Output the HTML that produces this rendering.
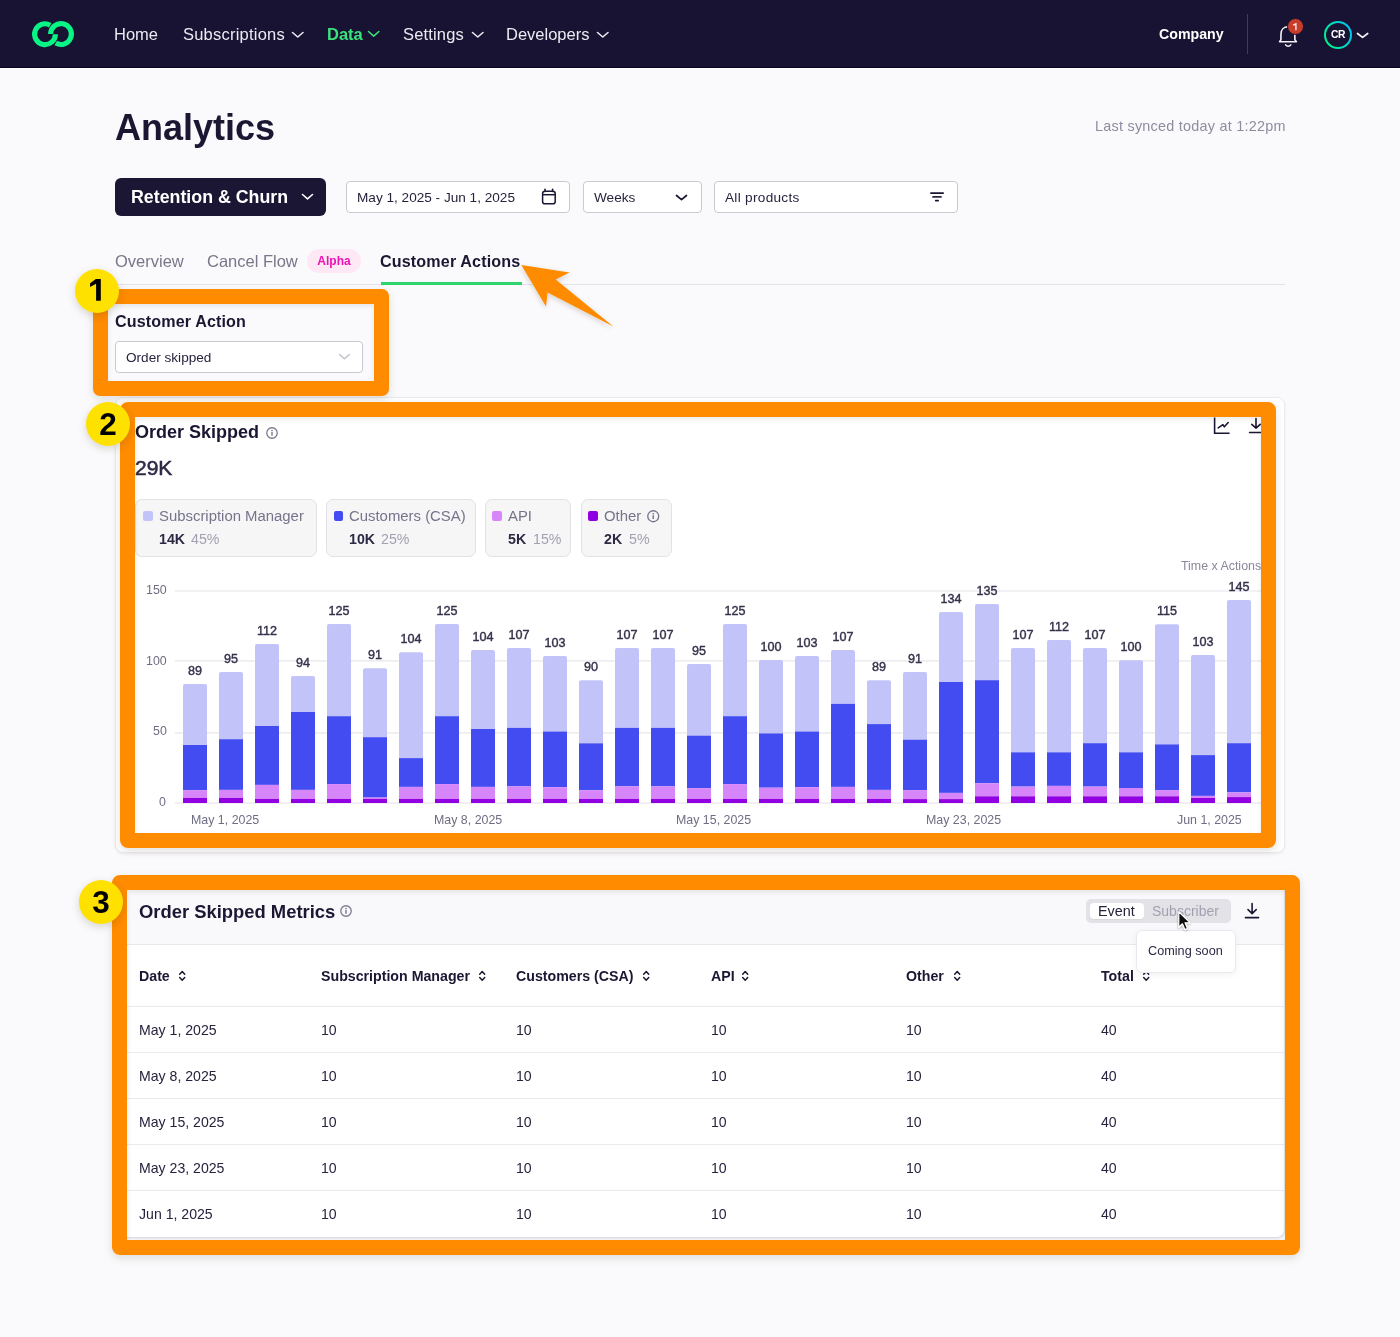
<!DOCTYPE html>
<html><head><meta charset="utf-8"><title>Analytics</title>
<style>
html,body{margin:0;padding:0;}
body{width:1400px;height:1337px;overflow:hidden;position:relative;background:#fafafc;font-family:"Liberation Sans",sans-serif;}
.a{position:absolute;}
.t{position:absolute;white-space:nowrap;}
svg.a{overflow:visible;}
.t{-webkit-font-smoothing:antialiased;will-change:transform;}
</style></head><body>
<div class="a" style="left:0.00px;top:0.00px;width:1400.00px;height:67.00px;background:#181332;"></div>
<div class="a" style="left:0.00px;top:67.00px;width:1400.00px;height:1.00px;background:#08041f;"></div>
<div class="a" style="left:0.00px;top:68.00px;width:1400.00px;height:1.00px;background:#ffffff;"></div>
<svg class="a" style="left:0;top:0" width="100" height="67"><path d="M55.40 34.20 A10.4 10.4 0 1 1 50.20 25.19" fill="none" stroke="#08f586" stroke-width="5.1"/><path d="M50.60 34.00 A10.4 10.4 0 1 1 55.80 43.01" fill="none" stroke="#08f586" stroke-width="5.1"/></svg>
<div class="t" style="left:113.80px;top:25.20px;font-size:16.5px;line-height:19.8px;font-weight:400;color:#eceaf2;">Home</div>
<div class="t" style="left:182.60px;top:25.20px;font-size:16.5px;line-height:19.8px;font-weight:400;color:#eceaf2;letter-spacing:0.22px;">Subscriptions</div>
<svg class="a" style="left:290.2px;top:29.5px" width="15.5" height="9.5" viewBox="-2 -2 15.5 9.5"><path d="M0.5 0.5 L5.75 5.0 L11.0 0.5" fill="none" stroke="#eceaf2" stroke-width="1.6" stroke-linecap="round" stroke-linejoin="round"/></svg>
<div class="t" style="left:326.80px;top:25.20px;font-size:16.5px;line-height:19.8px;font-weight:700;color:#3ce27c;">Data</div>
<svg class="a" style="left:366.3px;top:29.3px" width="15.4" height="9.6" viewBox="-2 -2 15.4 9.6"><path d="M0.5 0.5 L5.7 5.1 L10.9 0.5" fill="none" stroke="#3ce27c" stroke-width="1.6" stroke-linecap="round" stroke-linejoin="round"/></svg>
<div class="t" style="left:402.80px;top:25.20px;font-size:16.5px;line-height:19.8px;font-weight:400;color:#eceaf2;letter-spacing:0.17px;">Settings</div>
<svg class="a" style="left:470px;top:29.5px" width="15.5" height="9.5" viewBox="-2 -2 15.5 9.5"><path d="M0.5 0.5 L5.75 5.0 L11.0 0.5" fill="none" stroke="#eceaf2" stroke-width="1.6" stroke-linecap="round" stroke-linejoin="round"/></svg>
<div class="t" style="left:505.60px;top:25.20px;font-size:16.5px;line-height:19.8px;font-weight:400;color:#eceaf2;">Developers</div>
<svg class="a" style="left:595.2px;top:29.5px" width="15.5" height="9.5" viewBox="-2 -2 15.5 9.5"><path d="M0.5 0.5 L5.75 5.0 L11.0 0.5" fill="none" stroke="#eceaf2" stroke-width="1.6" stroke-linecap="round" stroke-linejoin="round"/></svg>
<div class="t" style="left:1158.80px;top:25.90px;font-size:14.2px;line-height:17.04px;font-weight:700;color:#ffffff;">Company</div>
<div class="a" style="left:1247.00px;top:14.00px;width:1.00px;height:40.00px;background:#3e3a57;"></div>
<svg class="a" style="left:1276px;top:18px" width="26" height="32" viewBox="0 0 26 32">
<path d="M3.6 23.7 L4.9 21.8 L5 16 C5 11.6 7.8 8.8 12 8.8 C16.2 8.8 18.8 11.6 18.8 16 L18.9 21.8 L20.4 23.7 Z" fill="none" stroke="#f3f2f7" stroke-width="1.6" stroke-linejoin="round"/>
<path d="M9.6 26.9 C10.9 28.7 13.5 28.7 14.8 26.9" fill="none" stroke="#f3f2f7" stroke-width="1.6" stroke-linecap="round"/>
</svg>
<div class="a" style="left:1286.6px;top:17.6px;width:15.2px;height:15.2px;border-radius:50%;background:#c63d2b;border:1.3px solid #181332;"></div>
<svg class="a" style="left:1280px;top:14px" width="30" height="30"><path d="M13.1 11.1 L15.9 9.9 V16.3" fill="none" stroke="#f6e9e6" stroke-width="1.4"/></svg>
<svg class="a" style="left:1322px;top:19px" width="32" height="32" viewBox="0 0 32 32"><defs><linearGradient id="ag" x1="0" y1="0.75" x2="1" y2="0.25"><stop offset="0" stop-color="#00f48a"/><stop offset="1" stop-color="#00c4f4"/></linearGradient></defs>
<circle cx="16" cy="16" r="13" fill="none" stroke="url(#ag)" stroke-width="2"/></svg>
<div class="t" style="left:1138.20px;width:400px;text-align:center;top:29.00px;font-size:10.3px;line-height:12.36px;font-weight:700;color:#ffffff;letter-spacing:-0.35px;">CR</div>
<svg class="a" style="left:1355.3px;top:30.700000000000003px" width="15.2" height="8.9" viewBox="-2 -2 15.2 8.9"><path d="M0.5 0.5 L5.6 4.4 L10.7 0.5" fill="none" stroke="#f3f2f7" stroke-width="1.7" stroke-linecap="round" stroke-linejoin="round"/></svg>
<div class="t" style="left:114.80px;top:105.80px;font-size:36px;line-height:43.2px;font-weight:700;color:#1b1733;">Analytics</div>
<div class="t" style="right:114.70px;top:117.70px;font-size:14.4px;line-height:17.28px;font-weight:400;color:#8e8c9f;letter-spacing:0.25px;">Last synced today at 1:22pm</div>
<div class="a" style="left:115.00px;top:178.00px;width:211.00px;height:38.00px;background:#1b1633;border-radius:6px;"></div>
<div class="t" style="left:130.50px;top:186.90px;font-size:17.8px;line-height:21.36px;font-weight:700;color:#ffffff;">Retention &amp; Churn</div>
<svg class="a" style="left:299.5px;top:192.4px" width="15" height="9.3" viewBox="-2 -2 15 9.3"><path d="M0.5 0.5 L5.5 4.8 L10.5 0.5" fill="none" stroke="#ffffff" stroke-width="1.6" stroke-linecap="round" stroke-linejoin="round"/></svg>
<div class="a" style="left:346.00px;top:181.00px;width:224.00px;height:31.50px;background:#ffffff;border:1px solid #cbc9d3;border-radius:4px;box-sizing:border-box;"></div>
<div class="t" style="left:357.30px;top:189.90px;font-size:13.6px;line-height:16.32px;font-weight:400;color:#27233d;">May 1, 2025 - Jun 1, 2025</div>
<svg class="a" style="left:540px;top:187px" width="18" height="19" viewBox="0 0 18 19">
<rect x="2.6" y="4.2" width="12.6" height="12.6" rx="2.4" fill="none" stroke="#1b1733" stroke-width="1.5"/>
<line x1="2.6" y1="7.7" x2="15.2" y2="7.7" stroke="#1b1733" stroke-width="1.5"/>
<line x1="5" y1="2.3" x2="5" y2="4.5" stroke="#1b1733" stroke-width="1.5" stroke-linecap="round"/>
<line x1="12.6" y1="2.3" x2="12.6" y2="4.5" stroke="#1b1733" stroke-width="1.5" stroke-linecap="round"/>
</svg>
<div class="a" style="left:582.50px;top:181.00px;width:119.50px;height:31.50px;background:#ffffff;border:1px solid #cbc9d3;border-radius:4px;box-sizing:border-box;"></div>
<div class="t" style="left:594.30px;top:189.90px;font-size:13.6px;line-height:16.32px;font-weight:400;color:#27233d;">Weeks</div>
<svg class="a" style="left:673.6px;top:192.6px" width="15" height="9.2" viewBox="-2 -2 15 9.2"><path d="M0.5 0.5 L5.5 4.7 L10.5 0.5" fill="none" stroke="#1b1733" stroke-width="1.7" stroke-linecap="round" stroke-linejoin="round"/></svg>
<div class="a" style="left:714.00px;top:181.00px;width:244.00px;height:31.50px;background:#ffffff;border:1px solid #cbc9d3;border-radius:4px;box-sizing:border-box;"></div>
<div class="t" style="left:725.30px;top:189.90px;font-size:13.6px;line-height:16.32px;font-weight:400;color:#27233d;letter-spacing:0.3px;">All products</div>
<svg class="a" style="left:928px;top:190px" width="18" height="14" viewBox="0 0 18 14">
<line x1="2.9" y1="3.1" x2="15.2" y2="3.1" stroke="#1b1733" stroke-width="1.7" stroke-linecap="round"/>
<line x1="5" y1="6.9" x2="13" y2="6.9" stroke="#2a2640" stroke-width="1.7" stroke-linecap="round"/>
<line x1="7.7" y1="10.55" x2="10.2" y2="10.55" stroke="#1b1733" stroke-width="1.7" stroke-linecap="round"/>
</svg>
<div class="a" style="left:115.00px;top:284.00px;width:1170.00px;height:1.00px;background:#e4e3e9;"></div>
<div class="t" style="left:114.60px;top:251.90px;font-size:16.5px;line-height:19.8px;font-weight:400;color:#787689;">Overview</div>
<div class="t" style="left:206.50px;top:251.90px;font-size:16.5px;line-height:19.8px;font-weight:400;color:#787689;">Cancel Flow</div>
<div class="a" style="left:307.00px;top:249.00px;width:54.00px;height:24.00px;background:#fee8f6;border-radius:12px;"></div>
<div class="t" style="left:134.00px;width:400px;text-align:center;top:254.00px;font-size:12px;line-height:14.4px;font-weight:700;color:#ec12b4;">Alpha</div>
<div class="t" style="left:380.30px;top:251.90px;font-size:16.1px;line-height:19.32px;font-weight:700;color:#1b1733;letter-spacing:0.15px;">Customer Actions</div>
<div class="a" style="left:381.00px;top:282.00px;width:141.00px;height:3.00px;background:#2fd46f;"></div>
<div class="t" style="left:114.60px;top:312.00px;font-size:16.1px;line-height:19.32px;font-weight:700;color:#1b1733;letter-spacing:0.13px;">Customer Action</div>
<div class="a" style="left:115.00px;top:341.00px;width:248.00px;height:32.00px;background:#ffffff;border:1px solid #c9c7d1;border-radius:4px;box-sizing:border-box;"></div>
<div class="t" style="left:126.30px;top:349.80px;font-size:13.6px;line-height:16.32px;font-weight:400;color:#27233d;">Order skipped</div>
<svg class="a" style="left:336.6px;top:352.4px" width="14.8" height="9.3" viewBox="-2 -2 14.8 9.3"><path d="M0.5 0.5 L5.4 4.8 L10.3 0.5" fill="none" stroke="#c2c1cb" stroke-width="1.5" stroke-linecap="round" stroke-linejoin="round"/></svg>
<div class="a" style="left:115.00px;top:397.00px;width:1170.00px;height:456.00px;background:#ffffff;border:1px solid #ebeaef;border-radius:8px;box-sizing:border-box;box-shadow:0 1px 3px rgba(20,20,50,0.06);"></div>
<div class="t" style="left:134.80px;top:422.00px;font-size:18px;line-height:21.6px;font-weight:700;color:#1b1733;">Order Skipped</div>
<svg class="a" style="left:266.05px;top:427px" width="12" height="12" viewBox="0 0 12 12"><circle cx="6.0" cy="6.0" r="5.25" fill="none" stroke="#7c7a8f" stroke-width="1.3"/><line x1="6.0" y1="5.1" x2="6.0" y2="8.8" stroke="#7c7a8f" stroke-width="1.45" stroke-linecap="butt"/><circle cx="6.0" cy="3.5" r="0.85" fill="#7c7a8f"/></svg>
<div class="t" style="left:134.80px;top:455.00px;font-size:21px;line-height:25.2px;font-weight:400;color:#2d2a45;-webkit-text-stroke:0.55px #2d2a45;">29K</div>
<svg class="a" style="left:1210px;top:412px" width="56" height="26" viewBox="0 0 56 26">
<path d="M4.6 5.5 V21.2 H19.6" fill="none" stroke="#1b1733" stroke-width="1.6"/>
<path d="M8.2 15.9 L12.9 12.6 L14.3 14.8 L18.2 10.5" fill="none" stroke="#1b1733" stroke-width="1.6" stroke-linecap="round" stroke-linejoin="round"/>
<path d="M46 6.5 V16.2 M41.8 12.3 L46 16.2 L50.2 12.3 M39.6 20.5 H52.5" fill="none" stroke="#1b1733" stroke-width="1.6" stroke-linecap="round" stroke-linejoin="round"/>
</svg>
<div class="a" style="left:135.40px;top:499.00px;width:181.30px;height:58.00px;background:#f6f6f7;border:1px solid #e2e1e6;border-radius:7px;box-sizing:border-box;"></div>
<div class="a" style="left:143.20px;top:511.40px;width:9.80px;height:9.70px;background:#c1c3f9;border-radius:2px;"></div>
<div class="t" style="left:158.90px;top:507.70px;font-size:14.9px;line-height:17.88px;font-weight:400;color:#76748a;">Subscription Manager</div>
<div class="t" style="left:158.70px;top:530.90px;font-size:14.2px;line-height:17.04px;font-weight:700;color:#2d2a45;">14K</div>
<div class="a" style="left:325.70px;top:499.00px;width:149.90px;height:58.00px;background:#f6f6f7;border:1px solid #e2e1e6;border-radius:7px;box-sizing:border-box;"></div>
<div class="a" style="left:333.50px;top:511.40px;width:9.80px;height:9.70px;background:#434cf1;border-radius:2px;"></div>
<div class="t" style="left:349.20px;top:507.70px;font-size:14.9px;line-height:17.88px;font-weight:400;color:#76748a;">Customers (CSA)</div>
<div class="t" style="left:349.00px;top:530.90px;font-size:14.2px;line-height:17.04px;font-weight:700;color:#2d2a45;">10K</div>
<div class="a" style="left:484.60px;top:499.00px;width:86.90px;height:58.00px;background:#f6f6f7;border:1px solid #e2e1e6;border-radius:7px;box-sizing:border-box;"></div>
<div class="a" style="left:492.40px;top:511.40px;width:9.80px;height:9.70px;background:#d786f9;border-radius:2px;"></div>
<div class="t" style="left:508.10px;top:507.70px;font-size:14.9px;line-height:17.88px;font-weight:400;color:#76748a;">API</div>
<div class="t" style="left:507.90px;top:530.90px;font-size:14.2px;line-height:17.04px;font-weight:700;color:#2d2a45;">5K</div>
<div class="a" style="left:580.50px;top:499.00px;width:91.00px;height:58.00px;background:#f6f6f7;border:1px solid #e2e1e6;border-radius:7px;box-sizing:border-box;"></div>
<div class="a" style="left:588.30px;top:511.40px;width:9.80px;height:9.70px;background:#9100e0;border-radius:2px;"></div>
<div class="t" style="left:604.00px;top:507.70px;font-size:14.9px;line-height:17.88px;font-weight:400;color:#76748a;">Other</div>
<div class="t" style="left:603.80px;top:530.90px;font-size:14.2px;line-height:17.04px;font-weight:700;color:#2d2a45;">2K</div>
<div class="t" style="left:191.00px;top:530.90px;font-size:14.2px;line-height:17.04px;font-weight:400;color:#a3a1b1;">45%</div>
<div class="t" style="left:381.00px;top:530.90px;font-size:14.2px;line-height:17.04px;font-weight:400;color:#a3a1b1;">25%</div>
<div class="t" style="left:532.70px;top:530.90px;font-size:14.2px;line-height:17.04px;font-weight:400;color:#a3a1b1;">15%</div>
<div class="t" style="left:628.60px;top:530.90px;font-size:14.2px;line-height:17.04px;font-weight:400;color:#a3a1b1;">5%</div>
<svg class="a" style="left:646.65px;top:510.05px" width="12.5" height="12.5" viewBox="0 0 12.5 12.5"><circle cx="6.25" cy="6.25" r="5.5" fill="none" stroke="#76748a" stroke-width="1.3"/><line x1="6.25" y1="5.35" x2="6.25" y2="9.05" stroke="#76748a" stroke-width="1.45" stroke-linecap="butt"/><circle cx="6.25" cy="3.75" r="0.85" fill="#76748a"/></svg>
<div class="t" style="left:1180.80px;top:558.80px;font-size:12.4px;line-height:14.88px;font-weight:400;color:#8a889b;">Time x Actions</div>
<svg class="a" style="left:0;top:0" width="1400" height="860"><line x1="175" y1="591" x2="1262" y2="591" stroke="#eeeef1" stroke-width="1.7"/><line x1="175" y1="660.8" x2="1262" y2="660.8" stroke="#eeeef1" stroke-width="1.7"/><line x1="175" y1="732.8" x2="1262" y2="732.8" stroke="#eeeef1" stroke-width="1.7"/><line x1="175" y1="803.2" x2="1262" y2="803.2" stroke="#eeeef1" stroke-width="1.7"/></svg>
<div class="t" style="right:1233.70px;top:583.00px;font-size:12.4px;line-height:14.88px;font-weight:400;color:#6f6d83;">150</div>
<div class="t" style="right:1233.70px;top:653.70px;font-size:12.4px;line-height:14.88px;font-weight:400;color:#6f6d83;">100</div>
<div class="t" style="right:1233.70px;top:724.30px;font-size:12.4px;line-height:14.88px;font-weight:400;color:#6f6d83;">50</div>
<div class="t" style="right:1233.70px;top:795.00px;font-size:12.4px;line-height:14.88px;font-weight:400;color:#6f6d83;">0</div>
<svg class="a" style="left:0;top:0" width="1400" height="860" viewBox="0 0 1400 860"><path d="M183 745.0 V686.1 Q183 684.1 185 684.1 H205 Q207 684.1 207 686.1 V745.0 Z" fill="#c1c3f9"/><rect x="183" y="745.0" width="24" height="45.20" fill="#434cf1"/><rect x="183" y="790.1999999999999" width="24" height="7.70" fill="#d786f9"/><rect x="183" y="797.9" width="24" height="5.10" fill="#9100e0"/><path d="M219 739.1999999999999 V673.9 Q219 671.9 221 671.9 H241 Q243 671.9 243 673.9 V739.1999999999999 Z" fill="#c1c3f9"/><rect x="219" y="739.1999999999999" width="24" height="50.70" fill="#434cf1"/><rect x="219" y="789.9" width="24" height="8.00" fill="#d786f9"/><rect x="219" y="797.9" width="24" height="5.10" fill="#9100e0"/><path d="M255 726.0 V646.0 Q255 644.0 257 644.0 H277 Q279 644.0 279 646.0 V726.0 Z" fill="#c1c3f9"/><rect x="255" y="726.0" width="24" height="58.90" fill="#434cf1"/><rect x="255" y="784.9" width="24" height="14.00" fill="#d786f9"/><rect x="255" y="798.9" width="24" height="4.10" fill="#9100e0"/><path d="M291 712.0 V677.9 Q291 675.9 293 675.9 H313 Q315 675.9 315 677.9 V712.0 Z" fill="#c1c3f9"/><rect x="291" y="712.0" width="24" height="77.90" fill="#434cf1"/><rect x="291" y="789.9" width="24" height="9.00" fill="#d786f9"/><rect x="291" y="798.9" width="24" height="4.10" fill="#9100e0"/><path d="M327 716.1999999999999 V626.1 Q327 624.1 329 624.1 H349 Q351 624.1 351 626.1 V716.1999999999999 Z" fill="#c1c3f9"/><rect x="327" y="716.1999999999999" width="24" height="67.90" fill="#434cf1"/><rect x="327" y="784.0999999999999" width="24" height="14.80" fill="#d786f9"/><rect x="327" y="798.9" width="24" height="4.10" fill="#9100e0"/><path d="M363 737.1999999999999 V670.2 Q363 668.2 365 668.2 H385 Q387 668.2 387 670.2 V737.1999999999999 Z" fill="#c1c3f9"/><rect x="363" y="737.1999999999999" width="24" height="60.40" fill="#434cf1"/><rect x="363" y="797.5999999999999" width="24" height="1.30" fill="#d786f9"/><rect x="363" y="798.9" width="24" height="4.10" fill="#9100e0"/><path d="M399 758.0999999999999 V654.2 Q399 652.2 401 652.2 H421 Q423 652.2 423 654.2 V758.0999999999999 Z" fill="#c1c3f9"/><rect x="399" y="758.0999999999999" width="24" height="28.80" fill="#434cf1"/><rect x="399" y="786.9" width="24" height="12.00" fill="#d786f9"/><rect x="399" y="798.9" width="24" height="4.10" fill="#9100e0"/><path d="M435 716.1999999999999 V626.1 Q435 624.1 437 624.1 H457 Q459 624.1 459 626.1 V716.1999999999999 Z" fill="#c1c3f9"/><rect x="435" y="716.1999999999999" width="24" height="67.90" fill="#434cf1"/><rect x="435" y="784.0999999999999" width="24" height="14.80" fill="#d786f9"/><rect x="435" y="798.9" width="24" height="4.10" fill="#9100e0"/><path d="M471 729.0 V652.1 Q471 650.1 473 650.1 H493 Q495 650.1 495 652.1 V729.0 Z" fill="#c1c3f9"/><rect x="471" y="729.0" width="24" height="57.90" fill="#434cf1"/><rect x="471" y="786.9" width="24" height="12.00" fill="#d786f9"/><rect x="471" y="798.9" width="24" height="4.10" fill="#9100e0"/><path d="M507 727.8 V649.9 Q507 647.9 509 647.9 H529 Q531 647.9 531 649.9 V727.8 Z" fill="#c1c3f9"/><rect x="507" y="727.8" width="24" height="58.60" fill="#434cf1"/><rect x="507" y="786.4" width="24" height="12.50" fill="#d786f9"/><rect x="507" y="798.9" width="24" height="4.10" fill="#9100e0"/><path d="M543 731.5 V658.1 Q543 656.1 545 656.1 H565 Q567 656.1 567 658.1 V731.5 Z" fill="#c1c3f9"/><rect x="543" y="731.5" width="24" height="55.70" fill="#434cf1"/><rect x="543" y="787.1999999999999" width="24" height="11.70" fill="#d786f9"/><rect x="543" y="798.9" width="24" height="4.10" fill="#9100e0"/><path d="M579 743.3 V682.2 Q579 680.2 581 680.2 H601 Q603 680.2 603 682.2 V743.3 Z" fill="#c1c3f9"/><rect x="579" y="743.3" width="24" height="46.90" fill="#434cf1"/><rect x="579" y="790.1999999999999" width="24" height="8.70" fill="#d786f9"/><rect x="579" y="798.9" width="24" height="4.10" fill="#9100e0"/><path d="M615 727.8 V649.9 Q615 647.9 617 647.9 H637 Q639 647.9 639 649.9 V727.8 Z" fill="#c1c3f9"/><rect x="615" y="727.8" width="24" height="58.60" fill="#434cf1"/><rect x="615" y="786.4" width="24" height="12.50" fill="#d786f9"/><rect x="615" y="798.9" width="24" height="4.10" fill="#9100e0"/><path d="M651 727.8 V649.9 Q651 647.9 653 647.9 H673 Q675 647.9 675 649.9 V727.8 Z" fill="#c1c3f9"/><rect x="651" y="727.8" width="24" height="58.60" fill="#434cf1"/><rect x="651" y="786.4" width="24" height="12.50" fill="#d786f9"/><rect x="651" y="798.9" width="24" height="4.10" fill="#9100e0"/><path d="M687 735.5999999999999 V666.0 Q687 664.0 689 664.0 H709 Q711 664.0 711 666.0 V735.5999999999999 Z" fill="#c1c3f9"/><rect x="687" y="735.5999999999999" width="24" height="52.60" fill="#434cf1"/><rect x="687" y="788.1999999999999" width="24" height="10.70" fill="#d786f9"/><rect x="687" y="798.9" width="24" height="4.10" fill="#9100e0"/><path d="M723 716.1999999999999 V626.1 Q723 624.1 725 624.1 H745 Q747 624.1 747 626.1 V716.1999999999999 Z" fill="#c1c3f9"/><rect x="723" y="716.1999999999999" width="24" height="67.90" fill="#434cf1"/><rect x="723" y="784.0999999999999" width="24" height="14.80" fill="#d786f9"/><rect x="723" y="798.9" width="24" height="4.10" fill="#9100e0"/><path d="M759 733.4 V661.9 Q759 659.9 761 659.9 H781 Q783 659.9 783 661.9 V733.4 Z" fill="#c1c3f9"/><rect x="759" y="733.4" width="24" height="54.30" fill="#434cf1"/><rect x="759" y="787.6999999999999" width="24" height="11.20" fill="#d786f9"/><rect x="759" y="798.9" width="24" height="4.10" fill="#9100e0"/><path d="M795 731.5 V658.1 Q795 656.1 797 656.1 H817 Q819 656.1 819 658.1 V731.5 Z" fill="#c1c3f9"/><rect x="795" y="731.5" width="24" height="55.70" fill="#434cf1"/><rect x="795" y="787.1999999999999" width="24" height="11.70" fill="#d786f9"/><rect x="795" y="798.9" width="24" height="4.10" fill="#9100e0"/><path d="M831 703.8 V652.1 Q831 650.1 833 650.1 H853 Q855 650.1 855 652.1 V703.8 Z" fill="#c1c3f9"/><rect x="831" y="703.8" width="24" height="83.10" fill="#434cf1"/><rect x="831" y="786.9" width="24" height="12.00" fill="#d786f9"/><rect x="831" y="798.9" width="24" height="4.10" fill="#9100e0"/><path d="M867 724.0999999999999 V682.2 Q867 680.2 869 680.2 H889 Q891 680.2 891 682.2 V724.0999999999999 Z" fill="#c1c3f9"/><rect x="867" y="724.0999999999999" width="24" height="65.80" fill="#434cf1"/><rect x="867" y="789.9" width="24" height="9.00" fill="#d786f9"/><rect x="867" y="798.9" width="24" height="4.10" fill="#9100e0"/><path d="M903 739.6999999999999 V674.0 Q903 672.0 905 672.0 H925 Q927 672.0 927 674.0 V739.6999999999999 Z" fill="#c1c3f9"/><rect x="903" y="739.6999999999999" width="24" height="50.40" fill="#434cf1"/><rect x="903" y="790.0999999999999" width="24" height="9.00" fill="#d786f9"/><rect x="903" y="799.0999999999999" width="24" height="3.90" fill="#9100e0"/><path d="M939 682.0 V614.1 Q939 612.1 941 612.1 H961 Q963 612.1 963 614.1 V682.0 Z" fill="#c1c3f9"/><rect x="939" y="682.0" width="24" height="110.90" fill="#434cf1"/><rect x="939" y="792.9" width="24" height="6.20" fill="#d786f9"/><rect x="939" y="799.0999999999999" width="24" height="3.90" fill="#9100e0"/><path d="M975 680.1999999999999 V606.0 Q975 604.0 977 604.0 H997 Q999 604.0 999 606.0 V680.1999999999999 Z" fill="#c1c3f9"/><rect x="975" y="680.1999999999999" width="24" height="103.10" fill="#434cf1"/><rect x="975" y="783.3" width="24" height="13.00" fill="#d786f9"/><rect x="975" y="796.3" width="24" height="6.70" fill="#9100e0"/><path d="M1011 752.3 V650.0 Q1011 648.0 1013 648.0 H1033 Q1035 648.0 1035 650.0 V752.3 Z" fill="#c1c3f9"/><rect x="1011" y="752.3" width="24" height="34.30" fill="#434cf1"/><rect x="1011" y="786.5999999999999" width="24" height="9.70" fill="#d786f9"/><rect x="1011" y="796.3" width="24" height="6.70" fill="#9100e0"/><path d="M1047 752.3 V642.0 Q1047 640.0 1049 640.0 H1069 Q1071 640.0 1071 642.0 V752.3 Z" fill="#c1c3f9"/><rect x="1047" y="752.3" width="24" height="33.60" fill="#434cf1"/><rect x="1047" y="785.9" width="24" height="10.40" fill="#d786f9"/><rect x="1047" y="796.3" width="24" height="6.70" fill="#9100e0"/><path d="M1083 743.1999999999999 V650.0 Q1083 648.0 1085 648.0 H1105 Q1107 648.0 1107 650.0 V743.1999999999999 Z" fill="#c1c3f9"/><rect x="1083" y="743.1999999999999" width="24" height="43.40" fill="#434cf1"/><rect x="1083" y="786.5999999999999" width="24" height="9.70" fill="#d786f9"/><rect x="1083" y="796.3" width="24" height="6.70" fill="#9100e0"/><path d="M1119 752.3 V662.3 Q1119 660.3 1121 660.3 H1141 Q1143 660.3 1143 662.3 V752.3 Z" fill="#c1c3f9"/><rect x="1119" y="752.3" width="24" height="35.70" fill="#434cf1"/><rect x="1119" y="788.0" width="24" height="8.30" fill="#d786f9"/><rect x="1119" y="796.3" width="24" height="6.70" fill="#9100e0"/><path d="M1155 744.4 V626.2 Q1155 624.2 1157 624.2 H1177 Q1179 624.2 1179 626.2 V744.4 Z" fill="#c1c3f9"/><rect x="1155" y="744.4" width="24" height="45.70" fill="#434cf1"/><rect x="1155" y="790.0999999999999" width="24" height="6.20" fill="#d786f9"/><rect x="1155" y="796.3" width="24" height="6.70" fill="#9100e0"/><path d="M1191 755.0999999999999 V657.0 Q1191 655.0 1193 655.0 H1213 Q1215 655.0 1215 657.0 V755.0999999999999 Z" fill="#c1c3f9"/><rect x="1191" y="755.0999999999999" width="24" height="40.80" fill="#434cf1"/><rect x="1191" y="795.9" width="24" height="2.10" fill="#d786f9"/><rect x="1191" y="798.0" width="24" height="5.00" fill="#9100e0"/><path d="M1227 743.1999999999999 V602.1 Q1227 600.1 1229 600.1 H1249 Q1251 600.1 1251 602.1 V743.1999999999999 Z" fill="#c1c3f9"/><rect x="1227" y="743.1999999999999" width="24" height="49.20" fill="#434cf1"/><rect x="1227" y="792.4" width="24" height="4.70" fill="#d786f9"/><rect x="1227" y="797.0999999999999" width="24" height="5.90" fill="#9100e0"/></svg>
<div class="t" style="left:-5.00px;width:400px;text-align:center;top:663.70px;font-size:12.6px;line-height:15.12px;font-weight:400;color:#34314b;-webkit-text-stroke:0.4px #34314b;">89</div>
<div class="t" style="left:31.00px;width:400px;text-align:center;top:651.50px;font-size:12.6px;line-height:15.12px;font-weight:400;color:#34314b;-webkit-text-stroke:0.4px #34314b;">95</div>
<div class="t" style="left:67.00px;width:400px;text-align:center;top:623.60px;font-size:12.6px;line-height:15.12px;font-weight:400;color:#34314b;-webkit-text-stroke:0.4px #34314b;">112</div>
<div class="t" style="left:103.00px;width:400px;text-align:center;top:655.50px;font-size:12.6px;line-height:15.12px;font-weight:400;color:#34314b;-webkit-text-stroke:0.4px #34314b;">94</div>
<div class="t" style="left:139.00px;width:400px;text-align:center;top:603.70px;font-size:12.6px;line-height:15.12px;font-weight:400;color:#34314b;-webkit-text-stroke:0.4px #34314b;">125</div>
<div class="t" style="left:175.00px;width:400px;text-align:center;top:647.80px;font-size:12.6px;line-height:15.12px;font-weight:400;color:#34314b;-webkit-text-stroke:0.4px #34314b;">91</div>
<div class="t" style="left:211.00px;width:400px;text-align:center;top:631.80px;font-size:12.6px;line-height:15.12px;font-weight:400;color:#34314b;-webkit-text-stroke:0.4px #34314b;">104</div>
<div class="t" style="left:247.00px;width:400px;text-align:center;top:603.70px;font-size:12.6px;line-height:15.12px;font-weight:400;color:#34314b;-webkit-text-stroke:0.4px #34314b;">125</div>
<div class="t" style="left:283.00px;width:400px;text-align:center;top:629.70px;font-size:12.6px;line-height:15.12px;font-weight:400;color:#34314b;-webkit-text-stroke:0.4px #34314b;">104</div>
<div class="t" style="left:319.00px;width:400px;text-align:center;top:627.50px;font-size:12.6px;line-height:15.12px;font-weight:400;color:#34314b;-webkit-text-stroke:0.4px #34314b;">107</div>
<div class="t" style="left:355.00px;width:400px;text-align:center;top:635.70px;font-size:12.6px;line-height:15.12px;font-weight:400;color:#34314b;-webkit-text-stroke:0.4px #34314b;">103</div>
<div class="t" style="left:391.00px;width:400px;text-align:center;top:659.80px;font-size:12.6px;line-height:15.12px;font-weight:400;color:#34314b;-webkit-text-stroke:0.4px #34314b;">90</div>
<div class="t" style="left:427.00px;width:400px;text-align:center;top:627.50px;font-size:12.6px;line-height:15.12px;font-weight:400;color:#34314b;-webkit-text-stroke:0.4px #34314b;">107</div>
<div class="t" style="left:463.00px;width:400px;text-align:center;top:627.50px;font-size:12.6px;line-height:15.12px;font-weight:400;color:#34314b;-webkit-text-stroke:0.4px #34314b;">107</div>
<div class="t" style="left:499.00px;width:400px;text-align:center;top:643.60px;font-size:12.6px;line-height:15.12px;font-weight:400;color:#34314b;-webkit-text-stroke:0.4px #34314b;">95</div>
<div class="t" style="left:535.00px;width:400px;text-align:center;top:603.70px;font-size:12.6px;line-height:15.12px;font-weight:400;color:#34314b;-webkit-text-stroke:0.4px #34314b;">125</div>
<div class="t" style="left:571.00px;width:400px;text-align:center;top:639.50px;font-size:12.6px;line-height:15.12px;font-weight:400;color:#34314b;-webkit-text-stroke:0.4px #34314b;">100</div>
<div class="t" style="left:607.00px;width:400px;text-align:center;top:635.70px;font-size:12.6px;line-height:15.12px;font-weight:400;color:#34314b;-webkit-text-stroke:0.4px #34314b;">103</div>
<div class="t" style="left:643.00px;width:400px;text-align:center;top:629.70px;font-size:12.6px;line-height:15.12px;font-weight:400;color:#34314b;-webkit-text-stroke:0.4px #34314b;">107</div>
<div class="t" style="left:679.00px;width:400px;text-align:center;top:659.80px;font-size:12.6px;line-height:15.12px;font-weight:400;color:#34314b;-webkit-text-stroke:0.4px #34314b;">89</div>
<div class="t" style="left:715.00px;width:400px;text-align:center;top:651.60px;font-size:12.6px;line-height:15.12px;font-weight:400;color:#34314b;-webkit-text-stroke:0.4px #34314b;">91</div>
<div class="t" style="left:751.00px;width:400px;text-align:center;top:591.70px;font-size:12.6px;line-height:15.12px;font-weight:400;color:#34314b;-webkit-text-stroke:0.4px #34314b;">134</div>
<div class="t" style="left:787.00px;width:400px;text-align:center;top:583.60px;font-size:12.6px;line-height:15.12px;font-weight:400;color:#34314b;-webkit-text-stroke:0.4px #34314b;">135</div>
<div class="t" style="left:823.00px;width:400px;text-align:center;top:627.60px;font-size:12.6px;line-height:15.12px;font-weight:400;color:#34314b;-webkit-text-stroke:0.4px #34314b;">107</div>
<div class="t" style="left:859.00px;width:400px;text-align:center;top:619.60px;font-size:12.6px;line-height:15.12px;font-weight:400;color:#34314b;-webkit-text-stroke:0.4px #34314b;">112</div>
<div class="t" style="left:895.00px;width:400px;text-align:center;top:627.60px;font-size:12.6px;line-height:15.12px;font-weight:400;color:#34314b;-webkit-text-stroke:0.4px #34314b;">107</div>
<div class="t" style="left:931.00px;width:400px;text-align:center;top:639.90px;font-size:12.6px;line-height:15.12px;font-weight:400;color:#34314b;-webkit-text-stroke:0.4px #34314b;">100</div>
<div class="t" style="left:967.00px;width:400px;text-align:center;top:603.80px;font-size:12.6px;line-height:15.12px;font-weight:400;color:#34314b;-webkit-text-stroke:0.4px #34314b;">115</div>
<div class="t" style="left:1003.00px;width:400px;text-align:center;top:634.60px;font-size:12.6px;line-height:15.12px;font-weight:400;color:#34314b;-webkit-text-stroke:0.4px #34314b;">103</div>
<div class="t" style="left:1039.00px;width:400px;text-align:center;top:579.70px;font-size:12.6px;line-height:15.12px;font-weight:400;color:#34314b;-webkit-text-stroke:0.4px #34314b;">145</div>
<div class="t" style="left:190.70px;top:812.90px;font-size:12.4px;line-height:14.88px;font-weight:400;color:#6f6d83;">May 1, 2025</div>
<div class="t" style="left:433.50px;top:812.90px;font-size:12.4px;line-height:14.88px;font-weight:400;color:#6f6d83;">May 8, 2025</div>
<div class="t" style="left:676.40px;top:812.90px;font-size:12.4px;line-height:14.88px;font-weight:400;color:#6f6d83;">May 15, 2025</div>
<div class="t" style="left:926.30px;top:812.90px;font-size:12.4px;line-height:14.88px;font-weight:400;color:#6f6d83;">May 23, 2025</div>
<div class="t" style="left:1176.70px;top:812.90px;font-size:12.4px;line-height:14.88px;font-weight:400;color:#6f6d83;">Jun 1, 2025</div>
<div class="a" style="left:115.00px;top:880.00px;width:1170.00px;height:357.50px;background:#ffffff;border:1px solid #e3e2e8;border-bottom:1.4px solid #dcdbe2;border-radius:8px;box-sizing:border-box;box-shadow:0 1px 2px rgba(40,40,80,0.08);"></div>
<div class="a" style="left:128.00px;top:881.00px;width:1156.00px;height:63.00px;background:#f9f9fc;"></div>
<div class="a" style="left:127.00px;top:944.00px;width:1158.00px;height:1.00px;background:#e9e8ed;"></div>
<div class="t" style="left:138.60px;top:900.80px;font-size:18.4px;line-height:22.08px;font-weight:700;color:#1b1733;">Order Skipped Metrics</div>
<svg class="a" style="left:340.1px;top:904.9px" width="12" height="12" viewBox="0 0 12 12"><circle cx="6.0" cy="6.0" r="5.25" fill="none" stroke="#7c7a8f" stroke-width="1.3"/><line x1="6.0" y1="5.1" x2="6.0" y2="8.8" stroke="#7c7a8f" stroke-width="1.45" stroke-linecap="butt"/><circle cx="6.0" cy="3.5" r="0.85" fill="#7c7a8f"/></svg>
<div class="a" style="left:1086.00px;top:899.00px;width:145.00px;height:24.00px;background:#e3e2e7;border-radius:5px;"></div>
<div class="a" style="left:1090.00px;top:903.00px;width:54.00px;height:16.30px;background:#ffffff;border-radius:4px;box-shadow:0 1px 1px rgba(0,0,0,0.05);"></div>
<div class="t" style="left:1098.30px;top:903.10px;font-size:14.4px;line-height:17.28px;font-weight:400;color:#25213b;">Event</div>
<div class="t" style="left:1151.60px;top:903.10px;font-size:14px;line-height:16.8px;font-weight:400;color:#a3a1b1;">Subscriber</div>
<svg class="a" style="left:1240px;top:899px" width="24" height="24" viewBox="0 0 24 24">
<path d="M12.1 4.6 V14.4 M8 10.6 L12.1 14.6 L16.2 10.6 M5.4 18.6 H18.6" fill="none" stroke="#1b1733" stroke-width="1.6" stroke-linecap="round" stroke-linejoin="round"/>
</svg>
<div class="t" style="left:138.80px;top:968.00px;font-size:14.2px;line-height:17.04px;font-weight:700;color:#1b1733;">Date</div>
<svg class="a" style="left:178px;top:970px" width="9" height="13" viewBox="0 0 9 13"><path d="M1.7 4.3 L4.2 1.6 L6.7 4.3 M1.7 7.6 L4.2 10.3 L6.7 7.6" fill="none" stroke="#1b1733" stroke-width="1.5" stroke-linecap="round" stroke-linejoin="round"/></svg>
<div class="t" style="left:321.30px;top:968.00px;font-size:14.2px;line-height:17.04px;font-weight:700;color:#1b1733;">Subscription Manager</div>
<svg class="a" style="left:478.3px;top:970px" width="9" height="13" viewBox="0 0 9 13"><path d="M1.7 4.3 L4.2 1.6 L6.7 4.3 M1.7 7.6 L4.2 10.3 L6.7 7.6" fill="none" stroke="#1b1733" stroke-width="1.5" stroke-linecap="round" stroke-linejoin="round"/></svg>
<div class="t" style="left:516.30px;top:968.00px;font-size:14.2px;line-height:17.04px;font-weight:700;color:#1b1733;">Customers (CSA)</div>
<svg class="a" style="left:641.9px;top:970px" width="9" height="13" viewBox="0 0 9 13"><path d="M1.7 4.3 L4.2 1.6 L6.7 4.3 M1.7 7.6 L4.2 10.3 L6.7 7.6" fill="none" stroke="#1b1733" stroke-width="1.5" stroke-linecap="round" stroke-linejoin="round"/></svg>
<div class="t" style="left:711.30px;top:968.00px;font-size:14.2px;line-height:17.04px;font-weight:700;color:#1b1733;">API</div>
<svg class="a" style="left:741px;top:970px" width="9" height="13" viewBox="0 0 9 13"><path d="M1.7 4.3 L4.2 1.6 L6.7 4.3 M1.7 7.6 L4.2 10.3 L6.7 7.6" fill="none" stroke="#1b1733" stroke-width="1.5" stroke-linecap="round" stroke-linejoin="round"/></svg>
<div class="t" style="left:906.30px;top:968.00px;font-size:14.2px;line-height:17.04px;font-weight:700;color:#1b1733;">Other</div>
<svg class="a" style="left:952.7px;top:970px" width="9" height="13" viewBox="0 0 9 13"><path d="M1.7 4.3 L4.2 1.6 L6.7 4.3 M1.7 7.6 L4.2 10.3 L6.7 7.6" fill="none" stroke="#1b1733" stroke-width="1.5" stroke-linecap="round" stroke-linejoin="round"/></svg>
<div class="t" style="left:1101.30px;top:968.00px;font-size:14.2px;line-height:17.04px;font-weight:700;color:#1b1733;">Total</div>
<svg class="a" style="left:1142.4px;top:970px" width="9" height="13" viewBox="0 0 9 13"><path d="M1.7 4.3 L4.2 1.6 L6.7 4.3 M1.7 7.6 L4.2 10.3 L6.7 7.6" fill="none" stroke="#1b1733" stroke-width="1.5" stroke-linecap="round" stroke-linejoin="round"/></svg>
<div class="a" style="left:127.00px;top:1006.00px;width:1158.00px;height:1.00px;background:#ebeaee;"></div>
<div class="t" style="left:138.80px;top:1022.00px;font-size:14.1px;line-height:16.92px;font-weight:400;color:#27233d;">May 1, 2025</div>
<div class="t" style="left:321.30px;top:1022.00px;font-size:14.1px;line-height:16.92px;font-weight:400;color:#27233d;">10</div>
<div class="t" style="left:516.30px;top:1022.00px;font-size:14.1px;line-height:16.92px;font-weight:400;color:#27233d;">10</div>
<div class="t" style="left:711.30px;top:1022.00px;font-size:14.1px;line-height:16.92px;font-weight:400;color:#27233d;">10</div>
<div class="t" style="left:906.30px;top:1022.00px;font-size:14.1px;line-height:16.92px;font-weight:400;color:#27233d;">10</div>
<div class="t" style="left:1101.30px;top:1022.00px;font-size:14.1px;line-height:16.92px;font-weight:400;color:#27233d;">40</div>
<div class="a" style="left:127.00px;top:1052.00px;width:1158.00px;height:1.00px;background:#ebeaee;"></div>
<div class="t" style="left:138.80px;top:1068.00px;font-size:14.1px;line-height:16.92px;font-weight:400;color:#27233d;">May 8, 2025</div>
<div class="t" style="left:321.30px;top:1068.00px;font-size:14.1px;line-height:16.92px;font-weight:400;color:#27233d;">10</div>
<div class="t" style="left:516.30px;top:1068.00px;font-size:14.1px;line-height:16.92px;font-weight:400;color:#27233d;">10</div>
<div class="t" style="left:711.30px;top:1068.00px;font-size:14.1px;line-height:16.92px;font-weight:400;color:#27233d;">10</div>
<div class="t" style="left:906.30px;top:1068.00px;font-size:14.1px;line-height:16.92px;font-weight:400;color:#27233d;">10</div>
<div class="t" style="left:1101.30px;top:1068.00px;font-size:14.1px;line-height:16.92px;font-weight:400;color:#27233d;">40</div>
<div class="a" style="left:127.00px;top:1098.00px;width:1158.00px;height:1.00px;background:#ebeaee;"></div>
<div class="t" style="left:138.80px;top:1114.00px;font-size:14.1px;line-height:16.92px;font-weight:400;color:#27233d;">May 15, 2025</div>
<div class="t" style="left:321.30px;top:1114.00px;font-size:14.1px;line-height:16.92px;font-weight:400;color:#27233d;">10</div>
<div class="t" style="left:516.30px;top:1114.00px;font-size:14.1px;line-height:16.92px;font-weight:400;color:#27233d;">10</div>
<div class="t" style="left:711.30px;top:1114.00px;font-size:14.1px;line-height:16.92px;font-weight:400;color:#27233d;">10</div>
<div class="t" style="left:906.30px;top:1114.00px;font-size:14.1px;line-height:16.92px;font-weight:400;color:#27233d;">10</div>
<div class="t" style="left:1101.30px;top:1114.00px;font-size:14.1px;line-height:16.92px;font-weight:400;color:#27233d;">40</div>
<div class="a" style="left:127.00px;top:1144.00px;width:1158.00px;height:1.00px;background:#ebeaee;"></div>
<div class="t" style="left:138.80px;top:1160.00px;font-size:14.1px;line-height:16.92px;font-weight:400;color:#27233d;">May 23, 2025</div>
<div class="t" style="left:321.30px;top:1160.00px;font-size:14.1px;line-height:16.92px;font-weight:400;color:#27233d;">10</div>
<div class="t" style="left:516.30px;top:1160.00px;font-size:14.1px;line-height:16.92px;font-weight:400;color:#27233d;">10</div>
<div class="t" style="left:711.30px;top:1160.00px;font-size:14.1px;line-height:16.92px;font-weight:400;color:#27233d;">10</div>
<div class="t" style="left:906.30px;top:1160.00px;font-size:14.1px;line-height:16.92px;font-weight:400;color:#27233d;">10</div>
<div class="t" style="left:1101.30px;top:1160.00px;font-size:14.1px;line-height:16.92px;font-weight:400;color:#27233d;">40</div>
<div class="a" style="left:127.00px;top:1190.00px;width:1158.00px;height:1.00px;background:#ebeaee;"></div>
<div class="t" style="left:138.80px;top:1206.00px;font-size:14.1px;line-height:16.92px;font-weight:400;color:#27233d;">Jun 1, 2025</div>
<div class="t" style="left:321.30px;top:1206.00px;font-size:14.1px;line-height:16.92px;font-weight:400;color:#27233d;">10</div>
<div class="t" style="left:516.30px;top:1206.00px;font-size:14.1px;line-height:16.92px;font-weight:400;color:#27233d;">10</div>
<div class="t" style="left:711.30px;top:1206.00px;font-size:14.1px;line-height:16.92px;font-weight:400;color:#27233d;">10</div>
<div class="t" style="left:906.30px;top:1206.00px;font-size:14.1px;line-height:16.92px;font-weight:400;color:#27233d;">10</div>
<div class="t" style="left:1101.30px;top:1206.00px;font-size:14.1px;line-height:16.92px;font-weight:400;color:#27233d;">40</div>
<div class="a" style="left:1135.50px;top:929.50px;width:100.00px;height:43.00px;background:#ffffff;border:1px solid #e9e9ef;border-radius:6px;box-sizing:border-box;box-shadow:0 2px 6px rgba(30,30,60,0.06);"></div>
<div class="t" style="left:1147.60px;top:944.00px;font-size:12.7px;line-height:15.24px;font-weight:400;color:#2d2a45;">Coming soon</div>
<svg class="a" style="left:1176px;top:909px" width="20" height="26" viewBox="0 0 20 26"><defs><filter id="cs" x="-30%" y="-30%" width="160%" height="160%"><feDropShadow dx="0" dy="1" stdDeviation="0.8" flood-color="#000" flood-opacity="0.35"/></filter></defs>
<path d="M2.8 2.8 L2.8 18.2 L6.4 14.8 L8.9 20.6 L11.5 19.5 L9 13.8 L13.9 13.6 Z" fill="#0c0c0c" stroke="#ffffff" stroke-width="1.2" stroke-linejoin="round" filter="url(#cs)"/>
</svg>
<div class="a" style="left:93.00px;top:289.00px;width:296.00px;height:107.00px;border:15px solid #ff8b00;border-radius:7px;box-sizing:border-box;box-shadow:0 3px 8px rgba(60,40,20,0.14), inset 0 2px 5px rgba(60,40,20,0.10);"></div>
<div class="a" style="left:120.00px;top:402.00px;width:1156.00px;height:446.00px;border:15px solid #ff8b00;border-radius:8px;box-sizing:border-box;box-shadow:0 3px 8px rgba(60,40,20,0.14), inset 0 2px 5px rgba(60,40,20,0.10);"></div>
<div class="a" style="left:112.00px;top:875.00px;width:1188.00px;height:380.00px;border:15px solid #ff8b00;border-radius:8px;box-sizing:border-box;box-shadow:0 3px 8px rgba(60,40,20,0.14), inset 0 2px 5px rgba(60,40,20,0.10);"></div>
<svg class="a" style="left:0;top:0" width="700" height="400" viewBox="0 0 700 400"><defs><filter id="sh" x="-20%" y="-20%" width="140%" height="140%"><feDropShadow dx="0" dy="2" stdDeviation="2.5" flood-color="#3c2814" flood-opacity="0.2"/></filter></defs>
<path d="M521.3 265 L569.5 272.5 L555.7 279.5 L613.3 326.6 L547.6 292.6 L546 306.5 Z" fill="#ff8b00" filter="url(#sh)"/></svg>
<div class="a" style="left:75px;top:268.5px;width:44px;height:44px;border-radius:50%;background:#ffe100;box-shadow:0 3px 8px rgba(60,50,0,0.18);"></div>
<svg class="a" style="left:0;top:0" width="200" height="320"><path d="M90.1 283.2 L95.9 279.1 L100.8 279.1 L100.8 300.8 L96.1 300.8 L96.1 283.7 L90.1 286.9 Z" fill="#000"/></svg>
<div class="a" style="left:86px;top:402px;width:44px;height:44px;border-radius:50%;background:#ffe100;box-shadow:0 3px 8px rgba(60,50,0,0.18);"></div>
<div class="t" style="left:-92.00px;width:400px;text-align:center;top:405.60px;font-size:31.5px;line-height:37.8px;font-weight:700;color:#000000;">2</div>
<div class="a" style="left:79px;top:880px;width:44px;height:44px;border-radius:50%;background:#ffe100;box-shadow:0 3px 8px rgba(60,50,0,0.18);"></div>
<div class="t" style="left:-99.00px;width:400px;text-align:center;top:883.60px;font-size:31.5px;line-height:37.8px;font-weight:700;color:#000000;">3</div>
</body></html>
